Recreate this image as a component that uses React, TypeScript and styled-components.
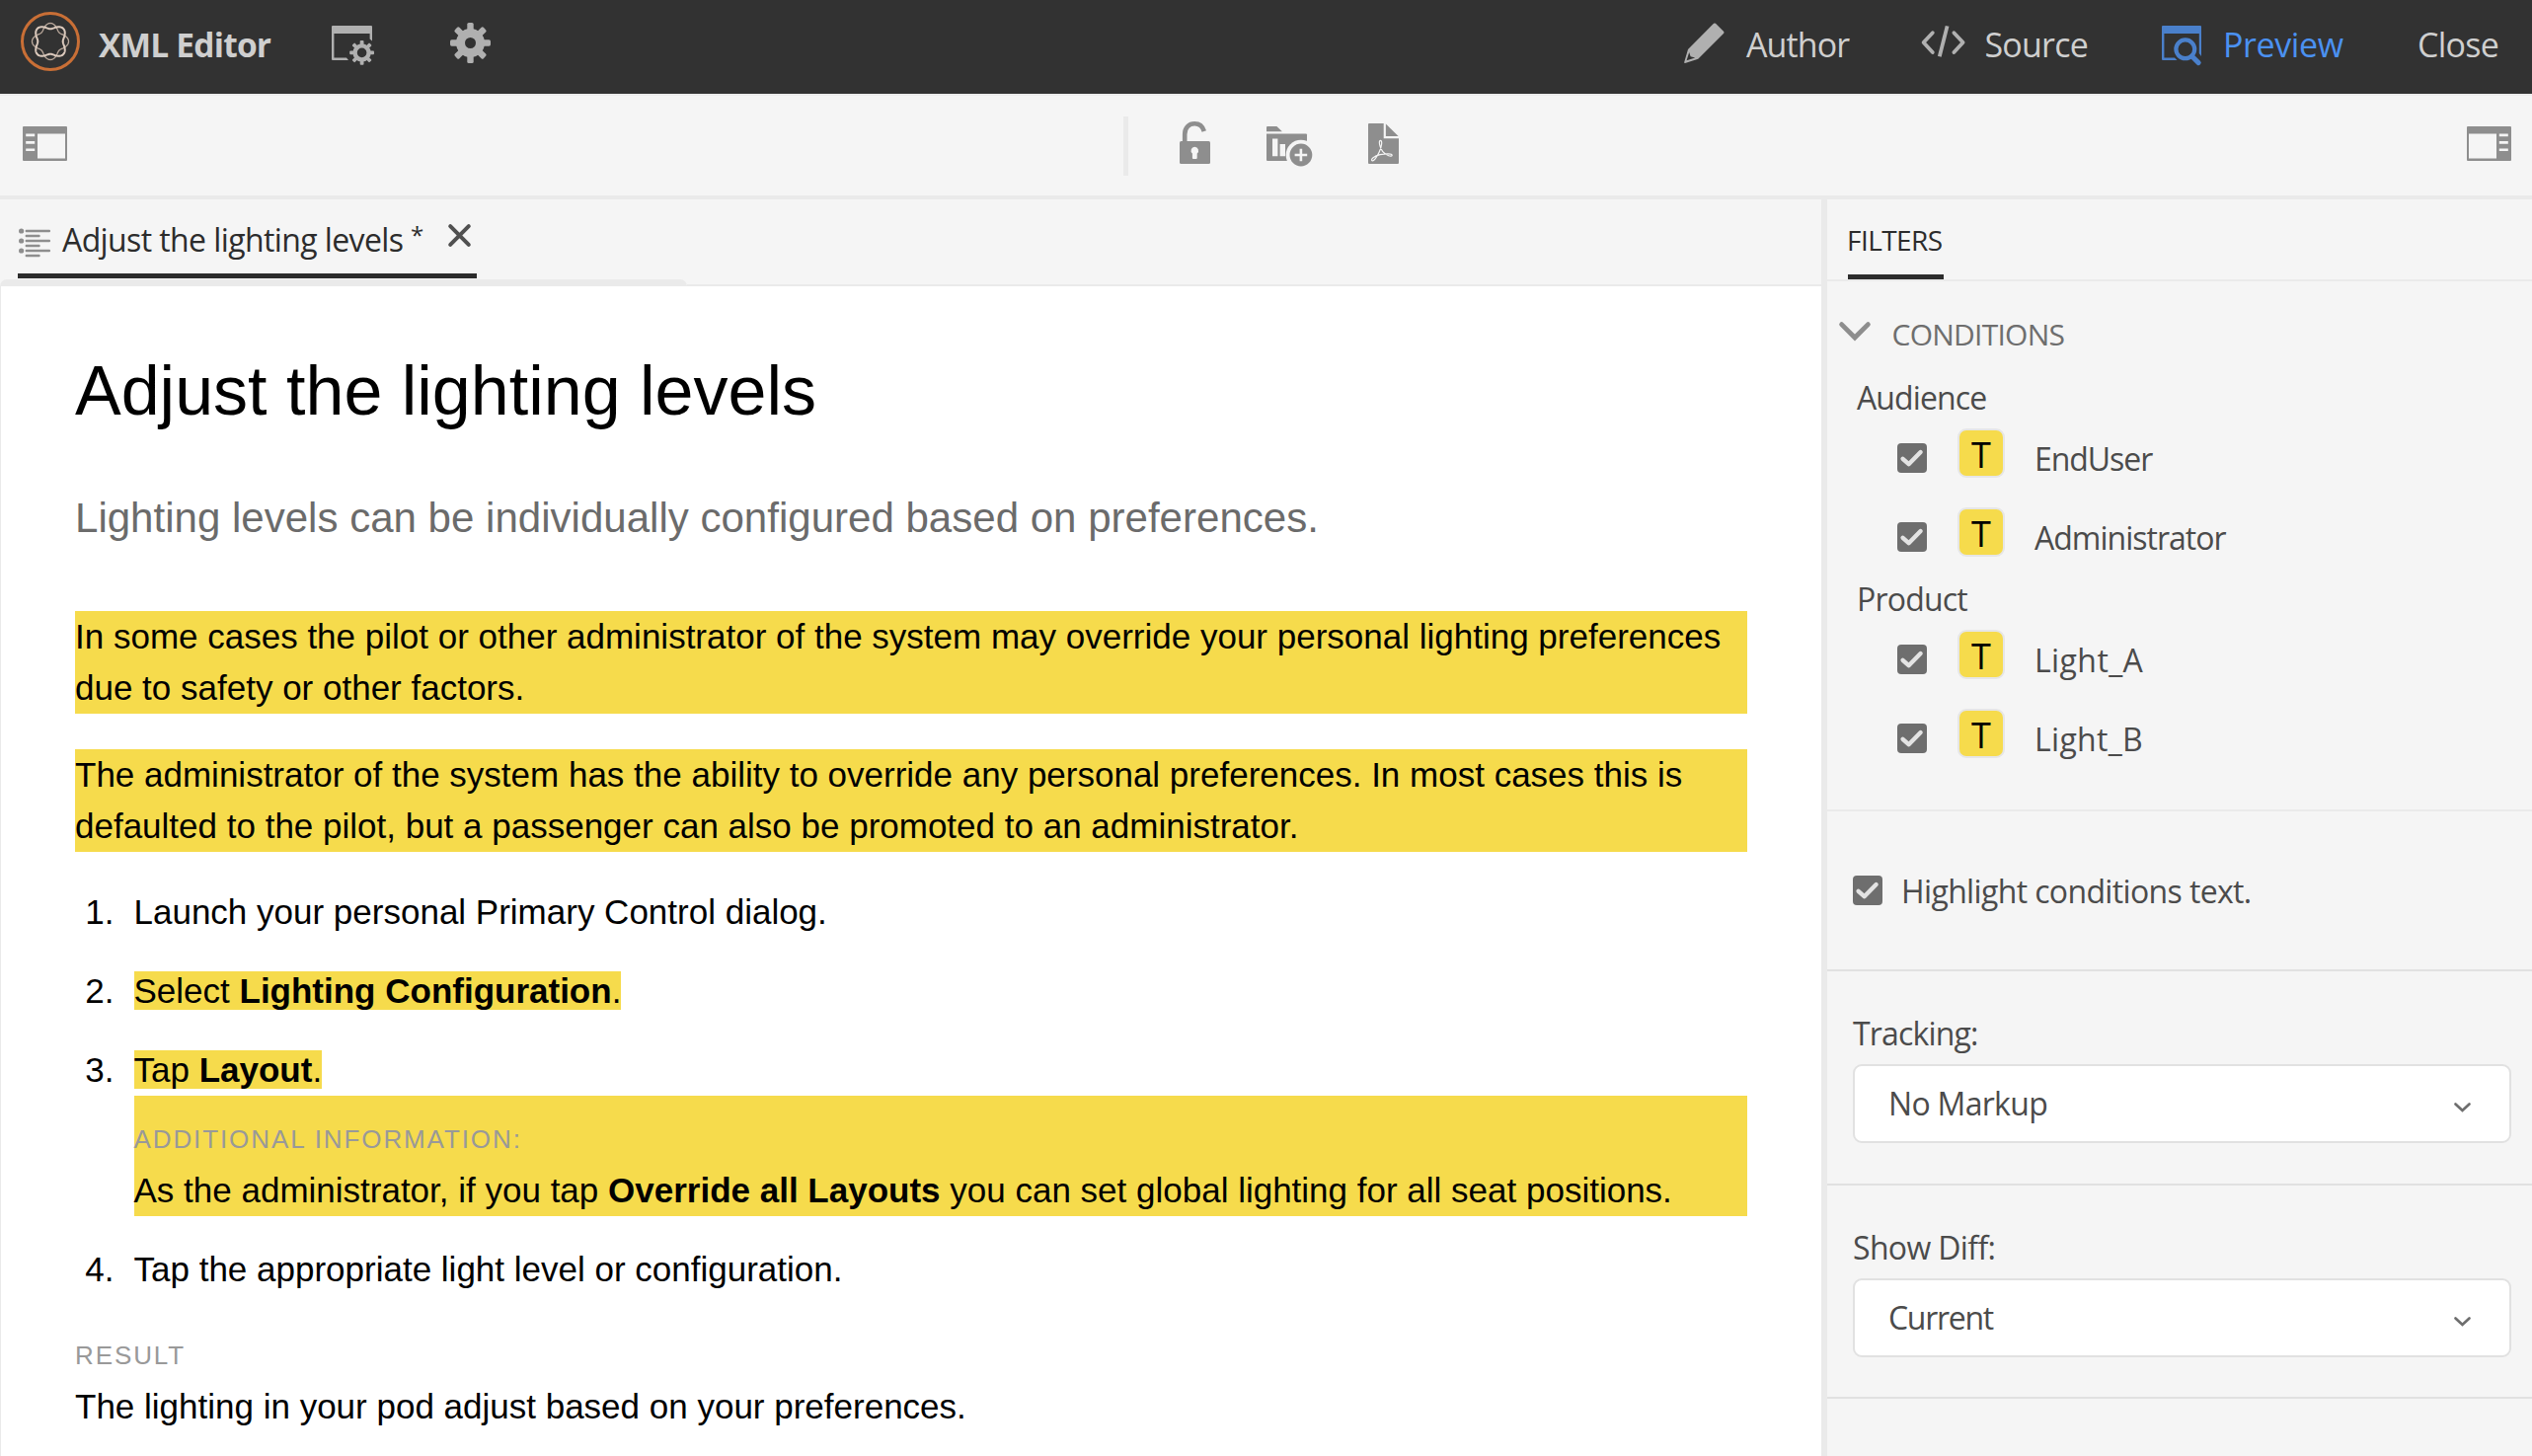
import React from 'react';
import styled, { createGlobalStyle } from 'styled-components';

const color = {
  dark: '#323232',
  panel: '#f5f5f5',
  line: '#eaeaea',
  rule: '#e1e1e1',
  icon: '#8e8e8e',
  headerIcon: '#b0b0b0',
  headerText: '#cfcfcf',
  active: '#4b91f1',
  text: '#4b4b4b',
  strong: '#2c2c2c',
  check: '#6e6e6e',
  mark: '#f6db4c',
};

const GlobalStyle = createGlobalStyle`
  *, *::before, *::after { box-sizing: border-box; }
  body { margin: 0; background: ${color.panel}; overflow: hidden; }
  svg { display: block; flex: none; overflow: visible; }
`;

const Page = styled.div`
  display: flex;
  flex-direction: column;
  width: 2565px;
  height: 1475px;
  overflow: hidden;
  background: ${color.panel};
  font-family: 'Open Sans', 'Noto Sans', sans-serif;
  font-size: 32px;
  color: ${color.text};
`;

/* Tracking is tuned per label so that every caption keeps its own width. */
const Label = styled.span<{ $track?: number }>`
  line-height: 40px;
  white-space: nowrap;
  letter-spacing: ${(p) => p.$track ?? 0}px;
`;

/* ---------- header ---------- */

const Header = styled.header`
  display: flex;
  justify-content: space-between;
  height: 95px;
  flex: none;
  background: ${color.dark};
  color: ${color.headerText};
`;

const HeaderGroup = styled.div`
  display: flex;
  align-items: flex-start;
`;

const LogoSlot = styled.div`
  padding: 12px 19px 0 21px;
`;

const Brand = styled.div`
  width: 236px;
  padding-top: 24.5px;
  font-size: 33.5px;
  font-weight: 700;
  line-height: 40px;
  letter-spacing: -0.8px;
  white-space: nowrap;
`;

const WindowSlot = styled.div`
  padding: 26px 77px 0 0;
`;

const GearSlot = styled.div`
  padding-top: 23px;
`;

const Modes = styled.nav`
  display: grid;
  grid-template-columns: 240px 244px 259px 116px;
`;

const Mode = styled.div<{ $active?: boolean; $gap?: number }>`
  display: flex;
  align-items: flex-start;
  gap: ${(p) => p.$gap ?? 22}px;
  font-size: 34px;
  color: ${(p) => (p.$active ? color.active : color.headerText)};

  & > span {
    margin-top: 25px;
  }
`;

const ModeIcon = styled.div<{ $top: number }>`
  padding-top: ${(p) => p.$top}px;
`;

/* ---------- toolbar ---------- */

const Toolbar = styled.div`
  display: grid;
  grid-template-columns: 1138px 1fr 66px;
  align-items: start;
  flex: none;
  height: 107px;
  border-top: 2px solid #ececec;
  border-bottom: 4px solid ${color.line};
`;

const ToolSlot = styled.div<{ $left?: number }>`
  padding: 31px 0 0 ${(p) => p.$left ?? 0}px;
`;

const Tools = styled.div`
  display: flex;
  align-items: flex-start;
  padding-top: 21px;
`;

const ToolDivider = styled.div`
  width: 5px;
  height: 60px;
  background: #eaeaea;
`;

const Tool = styled.div<{ $left: number; $top: number }>`
  margin: ${(p) => p.$top}px 0 0 ${(p) => p.$left}px;
`;

/* ---------- editor ---------- */

const Main = styled.main`
  display: flex;
  flex: 1;
  min-height: 0;
`;

const Editor = styled.section`
  display: flex;
  flex-direction: column;
  width: 1845px;
  flex: none;
`;

const Tab = styled.div`
  display: flex;
  align-items: flex-start;
  width: 465px;
  height: 80px;
  margin: 0 0 1px 18px;
  padding-left: 1px;
  border-bottom: 5px solid ${color.strong};
  color: ${color.strong};
`;

const TabIcon = styled.div`
  width: 44px;
  padding-top: 29px;
`;

const TabTitle = styled(Label)`
  width: 353px;
  margin-top: 21px;
`;

const Dirty = styled.span`
  width: 38px;
  margin-top: 21px;
  font-size: 24px;
  line-height: 30px;
`;

const TabClose = styled.div`
  padding-top: 25px;
`;

const Strip = styled.div`
  display: flex;
  align-items: flex-end;
  height: 7px;
  flex: none;
`;

const StripThumb = styled.div`
  width: 696px;
  height: 7px;
  border-radius: 7px 7px 0 0;
  background: ${color.line};
`;

const StripTrack = styled.div`
  flex: 1;
  height: 2px;
  background: ${color.line};
`;

const Sheet = styled.article`
  flex: 1;
  padding: 64px 75px 0;
  border-left: 1px solid ${color.line};
  background: #fff;
  color: #000;
  font-family: 'Liberation Sans', Arial, sans-serif;
  font-size: 35px;
  line-height: 52px;
`;

const Title = styled.h1`
  margin: 0;
  font-size: 70px;
  font-weight: 400;
  line-height: 84px;
`;

const Lead = styled.p`
  margin: 61px 0 68px;
  font-size: 42.05px;
  line-height: 52px;
  color: #6b6b6b;
`;

const Marked = styled.p`
  margin: 0 0 36px;
  background: ${color.mark};
`;

const Mark = styled.span`
  background: ${color.mark};
`;

const Steps = styled.ol`
  display: flex;
  flex-direction: column;
  gap: 28px;
  margin: -1px 0 0;
  padding: 0;
  list-style: none;
`;

const Step = styled.li`
  display: grid;
  grid-template-columns: 39.5px 1fr;
  column-gap: 20px;
`;

const StepNumber = styled.span`
  text-align: right;
`;

const Info = styled.div`
  padding-top: 24px;
  background: ${color.mark};
`;

const Kicker = styled.div`
  margin-bottom: 6px;
  font-size: 26px;
  line-height: 40px;
  letter-spacing: 1.9px;
  color: #999;
`;

const Result = styled.div`
  padding-top: 41px;
`;

/* ---------- side panel ---------- */

const Side = styled.aside`
  flex: 1;
  border-left: 6px solid ${color.line};
`;

const SideTabs = styled.div`
  height: 83px;
  padding-left: 21px;
  border-bottom: 2px solid ${color.line};
`;

const SideTab = styled.div`
  width: 97px;
  height: 81px;
  padding-top: 11px;
  border-bottom: 5px solid ${color.strong};
  font-size: 28px;
  line-height: 60px;
  letter-spacing: -0.55px;
  text-indent: -1px;
  color: ${color.strong};
`;

const Conditions = styled.section`
  height: 537px;
  padding-top: 34px;
  border-bottom: 2px solid ${color.line};
`;

const ConditionsHead = styled.div`
  display: flex;
  gap: 21.5px;
  padding-left: 12px;
  margin-bottom: 24px;
  font-size: 30px;
  color: #6e6e6e;

  & > svg {
    margin-top: 7px;
  }
`;

const Group = styled.div`
  display: flex;
  flex-direction: column;
  margin-bottom: 23px;
  padding-left: 30px;
`;

const Options = styled.div`
  display: flex;
  flex-direction: column;
  gap: 30px;
  margin-top: 11px;
  padding-left: 41px;
`;

const Option = styled.div`
  display: flex;
  height: 50px;

  & > span {
    margin: 11px 0 0 30px;
  }
`;

const CheckBox = styled.div<{ $top: number }>`
  width: 30px;
  height: 30px;
  margin-top: ${(p) => p.$top}px;
  border-radius: 4px;
  background: ${color.check};
`;

const Badge = styled.div`
  width: 48px;
  height: 50px;
  margin-left: 31px;
  border: 2px solid #e6e6e6;
  border-radius: 9px;
  background: ${color.mark};
  color: #000;
  font-size: 36px;
  line-height: 50px;
  text-align: center;
`;

const Highlight = styled.section`
  display: flex;
  gap: 19px;
  height: 162px;
  padding: 61px 0 0 26px;
  border-bottom: 2px solid ${color.rule};
`;

const Field = styled.section<{ $height: number }>`
  display: flex;
  flex-direction: column;
  gap: 11px;
  height: ${(p) => p.$height}px;
  padding: 43px 21px 0 26px;
  border-bottom: 2px solid ${color.rule};
`;

const Select = styled.div`
  display: flex;
  justify-content: space-between;
  align-items: center;
  height: 80px;
  padding: 0 39px 0 34px;
  border: 2px solid ${color.rule};
  border-radius: 9px;
  background: #fff;

  & > svg {
    margin-top: 7px;
  }
`;

/* ---------- icons ---------- */

const ring = (sign: number) => {
  let d = '';
  for (let i = 0; i < 144; i++) {
    const t = (i / 144) * Math.PI * 2;
    const r = 15.6 + sign * 2.9 * Math.cos(4 * t);
    d += `${i ? 'L' : 'M'}${(30 + r * Math.cos(t)).toFixed(2)} ${(30 + r * Math.sin(t)).toFixed(2)}`;
  }
  return d + 'Z';
};

const Logo = () => (
  <svg width="60" height="60" viewBox="0 0 60 60" fill="none">
    <circle cx="30" cy="30" r="28.5" stroke="#c96f36" strokeWidth="3" />
    <path d={ring(1)} stroke="#bba99c" strokeWidth="1.3" />
    <path d={ring(-1)} stroke="#dccabd" strokeWidth="2" />
  </svg>
);

const Teeth = ({ cx, cy, r, w, inner }: { cx: number; cy: number; r: number; w: number; inner: number }) => (
  <>
    {[0, 45, 90, 135, 180, 225, 270, 315].map((a) => (
      <rect key={a} x={cx - w / 2} y={cy - r} width={w} height={r - inner} rx={w / 4} transform={`rotate(${a} ${cx} ${cy})`} />
    ))}
  </>
);

const Gear = () => (
  <svg width="41" height="41" viewBox="0 0 41 41" fill={color.headerIcon}>
    <Teeth cx={20.5} cy={20.5} r={20.5} w={6.4} inner={11} />
    <circle cx="20.5" cy="20.5" r="10" fill="none" stroke={color.headerIcon} strokeWidth="9" />
  </svg>
);

const WindowGear = () => (
  <svg width="43" height="40" viewBox="0 0 43 40" fill={color.headerIcon}>
    <path d="M1 0H40Q41 0 41 1V15.5L38.6 13.5V8H2.4V32.6H15L17 35H1Q0 35 0 34V1Q0 0 1 0Z" />
    <Teeth cx={30.6} cy={27.4} r={12.4} w={3.8} inner={7} />
    <circle cx="30.6" cy="27.4" r="7" fill="none" stroke={color.headerIcon} strokeWidth="4.4" />
  </svg>
);

const Pencil = () => (
  <svg width="41" height="41" viewBox="0 0 41 41" fill={color.headerIcon}>
    <path
      fillRule="evenodd"
      d="M30 .8Q31 0 32 .8L40 8.8Q41 9.8 40.2 10.7L14.2 36.8L1 40.9Q0 41 .2 40L4 27ZM5.2 30L2.6 38.3L11.2 35.6L6.6 34.2Z"
    />
  </svg>
);

const Code = () => (
  <svg width="45" height="32" viewBox="0 0 45 32" fill="none" stroke={color.headerIcon} strokeWidth="3.8" strokeLinecap="round">
    <path d="M11.8 7.2L2.6 17L11.8 27M33.4 7.2L42.6 17L33.4 27" strokeLinejoin="round" />
    <path d="M26.6 .4L18.8 31.2" strokeLinecap="butt" />
  </svg>
);

const PreviewIcon = () => (
  <svg width="40" height="40" viewBox="0 0 40 40" fill="#4a80cb">
    <path d="M1 0H39Q40 0 40 1V31L37.8 28V8H2.4V32.6H13L15.5 35H1Q0 35 0 34V1Q0 0 1 0Z" />
    <g fill="none" stroke="#4a80cb">
      <circle cx="23.8" cy="23.8" r="9.4" strokeWidth="4.2" />
      <path d="M30.5 31L37.2 37.6" strokeWidth="5" strokeLinecap="round" />
    </g>
  </svg>
);

const PanelIcon = ({ flip }: { flip?: boolean }) => (
  <svg width="45" height="35" viewBox="0 0 45 35">
    <g transform={flip ? 'matrix(-1 0 0 1 45 0)' : undefined}>
      <rect width="45" height="35" rx="1" fill={color.icon} />
      <path d="M15 7.4H43V32.4H15ZM3.2 7.6H12.2V10.2H3.2ZM3.2 15H12.2V17.7H3.2ZM3.2 22.4H12.2V25H3.2Z" fill={color.panel} />
    </g>
  </svg>
);

const Unlock = () => (
  <svg width="31" height="43" viewBox="0 0 31 43">
    <path d="M5.2 21V13C5.2 6 9.5 2.3 15.2 2.3C20 2.3 23.4 5.2 24.8 10" fill="none" stroke={color.icon} strokeWidth="4.6" />
    <rect y="20" width="31" height="23" rx="1.5" fill={color.icon} />
    <path d="M15.3 25.8A3.8 3.8 0 0 1 17.7 32.5V37Q17.7 38 16.7 38H13.9Q12.9 38 12.9 37V32.5A3.8 3.8 0 0 1 15.3 25.8Z" fill={color.panel} />
  </svg>
);

const FolderAdd = () => (
  <svg width="46" height="40" viewBox="0 0 46 40" fill={color.icon}>
    <path d="M1 0H10.4L15.9 5.2H0V1Q0 0 1 0Z" />
    <path d="M0 7.4H40Q41 7.4 41 8.4V35H1Q0 35 0 34Z" />
    <path d="M6 12.6H11.4V30.2H6ZM13.6 18H19V30.2H13.6Z" fill={color.panel} />
    <circle cx="34.9" cy="29" r="15.2" fill={color.panel} />
    <circle cx="34.9" cy="29" r="11.4" />
    <path d="M34.9 22.7V35.3M28.6 29H41.2" stroke={color.panel} strokeWidth="2.6" />
  </svg>
);

const Pdf = () => (
  <svg width="31" height="41" viewBox="0 0 31 41" fill={color.icon}>
    <path d="M1 0H15.7V15.2H31V40Q31 41 30 41H1Q0 41 0 40V1Q0 0 1 0Z" />
    <path d="M17.9 .6L30.6 13H17.9Z" />
    <path
      d="M4 37.7C2.2 36.3 6 33 12 31.7C18 30.4 24.2 30.4 24.2 32.2C24.2 34.2 18 32.8 14.6 28.4C11.4 24 10.6 17.8 12.2 17.4C14.6 17 14 23 11.2 29C8.6 34.6 5.4 38.8 4 37.7Z"
      fill="none"
      stroke={color.panel}
      strokeWidth="1.2"
    />
  </svg>
);

const TopicIcon = () => (
  <svg width="32" height="30" viewBox="0 0 32 30" fill={color.icon}>
    {[3, 13, 23].map((y) => (
      <g key={y}>
        <circle cx="2.6" cy={y} r="2.6" />
        <rect x="6.6" y={y - 1.2} width="25.4" height="2.4" rx="1" />
        <rect x="6.6" y={y + 3.8} width="15" height="2.4" rx="1" />
      </g>
    ))}
  </svg>
);

const Cross = () => (
  <svg width="23" height="23" viewBox="0 0 23 23" stroke="#505050" strokeWidth="4" strokeLinecap="round">
    <path d="M2.2 2.2L20.8 20.8M20.8 2.2L2.2 20.8" />
  </svg>
);

const SectionChevron = () => (
  <svg width="32" height="20" viewBox="0 0 32 20" fill="none" stroke={color.icon} strokeWidth="4.8" strokeLinecap="round">
    <path d="M2.6 2.6L16 16L29.4 2.6" />
  </svg>
);

const SelectChevron = () => (
  <svg width="17" height="10" viewBox="0 0 17 10" fill="none" stroke="#6e6e6e" strokeWidth="2.7" strokeLinecap="round">
    <path d="M1.5 1.4L8.5 8L15.5 1.4" />
  </svg>
);

const Check = ({ top }: { top: number }) => (
  <CheckBox $top={top}>
    <svg width="30" height="30" viewBox="0 0 30 30" fill="none" stroke="#e3e3e3" strokeWidth="4.4" strokeLinecap="round" strokeLinejoin="round">
      <path d="M5.6 15.8L11.6 21.2L23.6 9" />
    </svg>
  </CheckBox>
);

/* ---------- content ---------- */

const groups = [
  { name: 'Audience', track: -0.9, options: [['EndUser', -1.05], ['Administrator', -1]] },
  { name: 'Product', track: -0.8, options: [['Light_A', 0.4], ['Light_B', 0.3]] },
] as { name: string; track: number; options: [string, number][] }[];

export default function App() {
  return (
    <Page>
      <GlobalStyle />
      <Header>
        <HeaderGroup>
          <LogoSlot><Logo /></LogoSlot>
          <Brand>XML Editor</Brand>
          <WindowSlot><WindowGear /></WindowSlot>
          <GearSlot><Gear /></GearSlot>
        </HeaderGroup>
        <Modes>
          <Mode>
            <ModeIcon $top={23}><Pencil /></ModeIcon>
            <Label $track={-0.9}>Author</Label>
          </Mode>
          <Mode $gap={19.5}>
            <ModeIcon $top={26}><Code /></ModeIcon>
            <Label $track={-0.8}>Source</Label>
          </Mode>
          <Mode $active>
            <ModeIcon $top={26}><PreviewIcon /></ModeIcon>
            <Label $track={-0.4}>Preview</Label>
          </Mode>
          <Mode>
            <Label $track={-0.75}>Close</Label>
          </Mode>
        </Modes>
      </Header>

      <Toolbar>
        <ToolSlot $left={23}><PanelIcon /></ToolSlot>
        <Tools>
          <ToolDivider />
          <Tool $left={52} $top={5}><Unlock /></Tool>
          <Tool $left={57} $top={10}><FolderAdd /></Tool>
          <Tool $left={57} $top={7}><Pdf /></Tool>
        </Tools>
        <ToolSlot><PanelIcon flip /></ToolSlot>
      </Toolbar>

      <Main>
        <Editor>
          <Tab>
            <TabIcon><TopicIcon /></TabIcon>
            <TabTitle $track={-0.6}>Adjust the lighting levels</TabTitle>
            <Dirty>*</Dirty>
            <TabClose><Cross /></TabClose>
          </Tab>
          <Strip><StripThumb /><StripTrack /></Strip>
          <Sheet>
            <Title>Adjust the lighting levels</Title>
            <Lead>Lighting levels can be individually configured based on preferences.</Lead>
            <Marked>
              In some cases the pilot or other administrator of the system may override your personal lighting preferences
              due to safety or other factors.
            </Marked>
            <Marked>
              The administrator of the system has the ability to override any personal preferences. In most cases this is
              defaulted to the pilot, but a passenger can also be promoted to an administrator.
            </Marked>
            <Steps>
              <Step>
                <StepNumber>1.</StepNumber>
                <div>Launch your personal Primary Control dialog.</div>
              </Step>
              <Step>
                <StepNumber>2.</StepNumber>
                <div><Mark>Select <b>Lighting Configuration</b>.</Mark></div>
              </Step>
              <Step>
                <StepNumber>3.</StepNumber>
                <div>
                  <Mark>Tap <b>Layout</b>.</Mark>
                  <Info>
                    <Kicker>ADDITIONAL INFORMATION:</Kicker>
                    As the administrator, if you tap <b>Override all Layouts</b> you can set global lighting for all seat positions.
                  </Info>
                </div>
              </Step>
              <Step>
                <StepNumber>4.</StepNumber>
                <div>Tap the appropriate light level or configuration.</div>
              </Step>
            </Steps>
            <Result>
              <Kicker>RESULT</Kicker>
              The lighting in your pod adjust based on your preferences.
            </Result>
          </Sheet>
        </Editor>

        <Side>
          <SideTabs><SideTab>FILTERS</SideTab></SideTabs>
          <Conditions>
            <ConditionsHead>
              <SectionChevron />
              <Label $track={-0.75}>CONDITIONS</Label>
            </ConditionsHead>
            {groups.map((g) => (
              <Group key={g.name}>
                <Label $track={g.track}>{g.name}</Label>
                <Options>
                  {g.options.map(([name, track]) => (
                    <Option key={name}>
                      <Check top={15} />
                      <Badge>T</Badge>
                      <Label $track={track}>{name}</Label>
                    </Option>
                  ))}
                </Options>
              </Group>
            ))}
          </Conditions>
          <Highlight>
            <Check top={4} />
            <Label $track={-0.64}>Highlight conditions text.</Label>
          </Highlight>
          <Field $height={217}>
            <Label $track={-0.83}>Tracking:</Label>
            <Select><Label $track={-0.7}>No Markup</Label><SelectChevron /></Select>
          </Field>
          <Field $height={216}>
            <Label $track={-0.65}>Show Diff:</Label>
            <Select><Label $track={-1.3}>Current</Label><SelectChevron /></Select>
          </Field>
        </Side>
      </Main>
    </Page>
  );
}
